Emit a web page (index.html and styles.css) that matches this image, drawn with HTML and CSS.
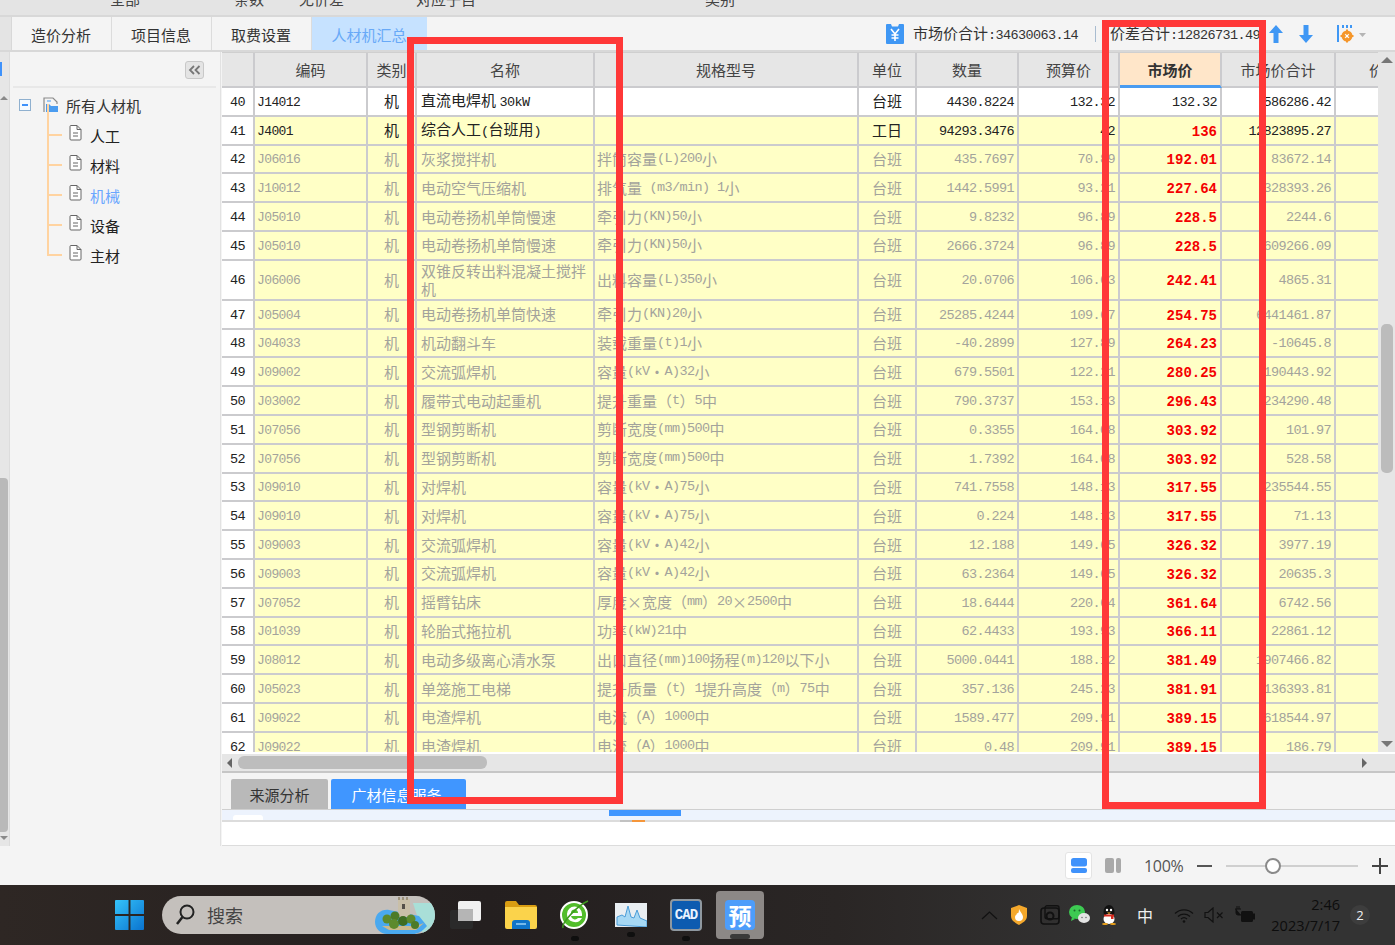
FILE: index.html
```html
<!DOCTYPE html>
<html lang="zh-CN">
<head>
<meta charset="utf-8">
<title>人材机汇总</title>
<link rel="stylesheet" href="styles.css">
</head>
<body>
<div class="topstrip">
  <span class="ts a">全部</span><span class="ts b">条数</span><span class="ts c1">无价差</span><span class="ts d">对应子目</span><span class="ts e">类别</span>
</div>

<div class="tabbar">
  <div class="tabstub"></div>
  <div class="tab">造价分析</div>
  <div class="tab">项目信息</div>
  <div class="tab">取费设置</div>
  <div class="tab active">人材机汇总</div>
  <div class="tools">
    <svg class="ico-yen" width="18" height="20" viewBox="0 0 18 20"><path d="M1 0h4l1 2.500h6l1-2.500h4a1 1 0 0 1 1 1v18a1 1 0 0 1-1 1H1a1 1 0 0 1-1-1V1a1 1 0 0 1 1-1z" fill="#3f97f4"/><path d="M5 5l4 5 4-5M9 10v7M5.500 11h7M5.500 14h7" stroke="#fff" stroke-width="1.600" fill="none"/></svg>
    <span class="sum">市场价合计<span class="l">:34630063.14</span></span>
    <span class="vsep"></span>
    <span class="sum s2">价差合计<span class="l">:12826731.49</span></span>
    <svg class="ico-up" width="14" height="18" viewBox="0 0 14 18"><path d="M7 0l7 8H9.500v10h-5V8H0z" fill="#3f97f4"/></svg>
    <svg class="ico-down" width="14" height="18" viewBox="0 0 14 18"><path d="M7 18l7-8H9.500V0h-5v10H0z" fill="#3f97f4"/></svg>
    <svg class="ico-set" width="32" height="20" viewBox="0 0 32 20"><path d="M1 1v17" stroke="#3f97f4" stroke-width="2"/><path d="M6 1v3M10 1v3M14 1v3" stroke="#3f97f4" stroke-width="2"/><circle cx="10" cy="12" r="4" fill="none" stroke="#f5962a" stroke-width="3"/><path d="M10 5.500v13M3.500 12h13" stroke="#f5962a" stroke-width="2"/><circle cx="10" cy="12" r="1.500" fill="#fff"/><path d="M22 9h7l-3.500 4z" fill="#b5b5b5"/></svg>
  </div>
</div>

<div class="main">
  <div class="leftstrip">
    <div class="lmark"></div>
    <div class="lcaret"></div>
    <div class="lthumb"></div>
    <div class="lcaret2"></div>
  </div>
  <aside class="side">
    <div class="sidehead"><button class="collapse"><svg width="13" height="10" viewBox="0 0 13 10"><path d="M6 1L2 5l4 4M11.500 1L7.500 5l4 4" fill="none" stroke="#777" stroke-width="1.800"/></svg></button></div>
    <div class="tree">
      <div class="root">
        <span class="exp"></span>
        <svg class="ico-root" width="16" height="16" viewBox="0 0 16 16"><path d="M1 15V1h9l4 4v2" fill="none" stroke="#8a8a8a" stroke-width="1.200"/><path d="M3 15h12V9H8L6 7H3z" fill="#4a9cf0"/><path d="M4 3h4v2H4z" fill="#9fc8f2"/></svg>
        <span>所有人材机</span>
      </div>
      <div class="leaf"><svg class="ico-doc" width="13" height="16" viewBox="0 0 13 16"><path d="M1 1.500a1 1 0 0 1 1-1h6l4 4v9.500a1 1 0 0 1-1 1H2a1 1 0 0 1-1-1zM8 .5v4h4M4 8h5M4 11h5" fill="#fff" stroke="#666"/></svg><span>人工</span></div>
      <div class="leaf"><svg class="ico-doc" width="13" height="16" viewBox="0 0 13 16"><path d="M1 1.500a1 1 0 0 1 1-1h6l4 4v9.500a1 1 0 0 1-1 1H2a1 1 0 0 1-1-1zM8 .5v4h4M4 8h5M4 11h5" fill="#fff" stroke="#666"/></svg><span>材料</span></div>
      <div class="leaf on"><svg class="ico-doc" width="13" height="16" viewBox="0 0 13 16"><path d="M1 1.500a1 1 0 0 1 1-1h6l4 4v9.500a1 1 0 0 1-1 1H2a1 1 0 0 1-1-1zM8 .5v4h4M4 8h5M4 11h5" fill="#fff" stroke="#666"/></svg><span>机械</span></div>
      <div class="leaf"><svg class="ico-doc" width="13" height="16" viewBox="0 0 13 16"><path d="M1 1.500a1 1 0 0 1 1-1h6l4 4v9.500a1 1 0 0 1-1 1H2a1 1 0 0 1-1-1zM8 .5v4h4M4 8h5M4 11h5" fill="#fff" stroke="#666"/></svg><span>设备</span></div>
      <div class="leaf last"><svg class="ico-doc" width="13" height="16" viewBox="0 0 13 16"><path d="M1 1.500a1 1 0 0 1 1-1h6l4 4v9.500a1 1 0 0 1-1 1H2a1 1 0 0 1-1-1zM8 .5v4h4M4 8h5M4 11h5" fill="#fff" stroke="#666"/></svg><span>主材</span></div>
    </div>
  </aside>

  <section class="content">
    <div class="tablewrap">
      <div class="table">
        <div class="row head">
          <div class="c"></div><div class="c">编码</div><div class="c">类别</div><div class="c">名称</div><div class="c">规格型号</div><div class="c">单位</div><div class="c">数量</div><div class="c">预算价</div><div class="c hot">市场价</div><div class="c">市场价合计</div><div class="c cut">价差合计</div>
        </div>
        <div class="row white"><div class="c no">40</div><div class="c code">J14012</div><div class="c mid">机</div><div class="c nm"><span>直流电焊机 <span class="l">30kW</span></span></div><div class="c sp"></div><div class="c mid">台班</div><div class="c r">4430.8224</div><div class="c r">132.32</div><div class="c r">132.32</div><div class="c r">586286.42</div><div class="c"></div></div>
        <div class="row"><div class="c no">41</div><div class="c code">J4001</div><div class="c mid">机</div><div class="c nm"><span>综合人工<span class="l">(</span>台班用<span class="l">)</span></span></div><div class="c sp"></div><div class="c mid">工日</div><div class="c r">94293.3476</div><div class="c r">42</div><div class="c r p">136</div><div class="c r">12823895.27</div><div class="c"></div></div>
        <div class="row dim"><div class="c no">42</div><div class="c code">J06016</div><div class="c mid">机</div><div class="c nm">灰浆搅拌机</div><div class="c sp">拌筒容量<span class="l">(L)200</span>小</div><div class="c mid">台班</div><div class="c r">435.7697</div><div class="c r">70.89</div><div class="c r p">192.01</div><div class="c r">83672.14</div><div class="c"></div></div>
        <div class="row dim"><div class="c no">43</div><div class="c code">J10012</div><div class="c mid">机</div><div class="c nm">电动空气压缩机</div><div class="c sp">排气量<span class="l"> (m3/min) 1</span>小</div><div class="c mid">台班</div><div class="c r">1442.5991</div><div class="c r">93.21</div><div class="c r p">227.64</div><div class="c r">328393.26</div><div class="c"></div></div>
        <div class="row dim"><div class="c no">44</div><div class="c code">J05010</div><div class="c mid">机</div><div class="c nm">电动卷扬机单筒慢速</div><div class="c sp">牵引力<span class="l">(KN)50</span>小</div><div class="c mid">台班</div><div class="c r">9.8232</div><div class="c r">96.89</div><div class="c r p">228.5</div><div class="c r">2244.6</div><div class="c"></div></div>
        <div class="row dim"><div class="c no">45</div><div class="c code">J05010</div><div class="c mid">机</div><div class="c nm">电动卷扬机单筒慢速</div><div class="c sp">牵引力<span class="l">(KN)50</span>小</div><div class="c mid">台班</div><div class="c r">2666.3724</div><div class="c r">96.89</div><div class="c r p">228.5</div><div class="c r">609266.09</div><div class="c"></div></div>
        <div class="row dim tall"><div class="c no">46</div><div class="c code">J06006</div><div class="c mid">机</div><div class="c nm">双锥反转出料混凝土搅拌机</div><div class="c sp">出料容量<span class="l">(L)350</span>小</div><div class="c mid">台班</div><div class="c r">20.0706</div><div class="c r">106.63</div><div class="c r p">242.41</div><div class="c r">4865.31</div><div class="c"></div></div>
        <div class="row dim"><div class="c no">47</div><div class="c code">J05004</div><div class="c mid">机</div><div class="c nm">电动卷扬机单筒快速</div><div class="c sp">牵引力<span class="l">(KN)20</span>小</div><div class="c mid">台班</div><div class="c r">25285.4244</div><div class="c r">109.67</div><div class="c r p">254.75</div><div class="c r">6441461.87</div><div class="c"></div></div>
        <div class="row dim"><div class="c no">48</div><div class="c code">J04033</div><div class="c mid">机</div><div class="c nm">机动翻斗车</div><div class="c sp">装载重量<span class="l">(t)1</span>小</div><div class="c mid">台班</div><div class="c r">-40.2899</div><div class="c r">127.89</div><div class="c r p">264.23</div><div class="c r">-10645.8</div><div class="c"></div></div>
        <div class="row dim"><div class="c no">49</div><div class="c code">J09002</div><div class="c mid">机</div><div class="c nm">交流弧焊机</div><div class="c sp">容量<span class="l">(kV</span>・<span class="l">A)32</span>小</div><div class="c mid">台班</div><div class="c r">679.5501</div><div class="c r">122.21</div><div class="c r p">280.25</div><div class="c r">190443.92</div><div class="c"></div></div>
        <div class="row dim"><div class="c no">50</div><div class="c code">J03002</div><div class="c mid">机</div><div class="c nm">履带式电动起重机</div><div class="c sp">提升重量（<span class="l">t</span>）<span class="l">5</span>中</div><div class="c mid">台班</div><div class="c r">790.3737</div><div class="c r">153.13</div><div class="c r p">296.43</div><div class="c r">234290.48</div><div class="c"></div></div>
        <div class="row dim"><div class="c no">51</div><div class="c code">J07056</div><div class="c mid">机</div><div class="c nm">型钢剪断机</div><div class="c sp">剪断宽度<span class="l">(mm)500</span>中</div><div class="c mid">台班</div><div class="c r">0.3355</div><div class="c r">164.08</div><div class="c r p">303.92</div><div class="c r">101.97</div><div class="c"></div></div>
        <div class="row dim"><div class="c no">52</div><div class="c code">J07056</div><div class="c mid">机</div><div class="c nm">型钢剪断机</div><div class="c sp">剪断宽度<span class="l">(mm)500</span>中</div><div class="c mid">台班</div><div class="c r">1.7392</div><div class="c r">164.08</div><div class="c r p">303.92</div><div class="c r">528.58</div><div class="c"></div></div>
        <div class="row dim"><div class="c no">53</div><div class="c code">J09010</div><div class="c mid">机</div><div class="c nm">对焊机</div><div class="c sp">容量<span class="l">(kV</span>・<span class="l">A)75</span>小</div><div class="c mid">台班</div><div class="c r">741.7558</div><div class="c r">148.13</div><div class="c r p">317.55</div><div class="c r">235544.55</div><div class="c"></div></div>
        <div class="row dim"><div class="c no">54</div><div class="c code">J09010</div><div class="c mid">机</div><div class="c nm">对焊机</div><div class="c sp">容量<span class="l">(kV</span>・<span class="l">A)75</span>小</div><div class="c mid">台班</div><div class="c r">0.224</div><div class="c r">148.13</div><div class="c r p">317.55</div><div class="c r">71.13</div><div class="c"></div></div>
        <div class="row dim"><div class="c no">55</div><div class="c code">J09003</div><div class="c mid">机</div><div class="c nm">交流弧焊机</div><div class="c sp">容量<span class="l">(kV</span>・<span class="l">A)42</span>小</div><div class="c mid">台班</div><div class="c r">12.188</div><div class="c r">149.65</div><div class="c r p">326.32</div><div class="c r">3977.19</div><div class="c"></div></div>
        <div class="row dim"><div class="c no">56</div><div class="c code">J09003</div><div class="c mid">机</div><div class="c nm">交流弧焊机</div><div class="c sp">容量<span class="l">(kV</span>・<span class="l">A)42</span>小</div><div class="c mid">台班</div><div class="c r">63.2364</div><div class="c r">149.65</div><div class="c r p">326.32</div><div class="c r">20635.3</div><div class="c"></div></div>
        <div class="row dim"><div class="c no">57</div><div class="c code">J07052</div><div class="c mid">机</div><div class="c nm">摇臂钻床</div><div class="c sp">厚度<span class="fw">×</span>宽度（<span class="l">mm</span>）<span class="l">20</span><span class="fw">×</span><span class="l">2500</span>中</div><div class="c mid">台班</div><div class="c r">18.6444</div><div class="c r">220.64</div><div class="c r p">361.64</div><div class="c r">6742.56</div><div class="c"></div></div>
        <div class="row dim"><div class="c no">58</div><div class="c code">J01039</div><div class="c mid">机</div><div class="c nm">轮胎式拖拉机</div><div class="c sp">功率<span class="l">(kW)21</span>中</div><div class="c mid">台班</div><div class="c r">62.4433</div><div class="c r">193.93</div><div class="c r p">366.11</div><div class="c r">22861.12</div><div class="c"></div></div>
        <div class="row dim"><div class="c no">59</div><div class="c code">J08012</div><div class="c mid">机</div><div class="c nm">电动多级离心清水泵</div><div class="c sp">出口直径<span class="l">(mm)100</span>扬程<span class="l">(m)120</span>以下小</div><div class="c mid">台班</div><div class="c r">5000.0441</div><div class="c r">188.12</div><div class="c r p">381.49</div><div class="c r">1907466.82</div><div class="c"></div></div>
        <div class="row dim"><div class="c no">60</div><div class="c code">J05023</div><div class="c mid">机</div><div class="c nm">单笼施工电梯</div><div class="c sp">提升质量（<span class="l">t</span>）<span class="l">1</span>提升高度（<span class="l">m</span>）<span class="l">75</span>中</div><div class="c mid">台班</div><div class="c r">357.136</div><div class="c r">245.23</div><div class="c r p">381.91</div><div class="c r">136393.81</div><div class="c"></div></div>
        <div class="row dim"><div class="c no">61</div><div class="c code">J09022</div><div class="c mid">机</div><div class="c nm">电渣焊机</div><div class="c sp">电流（<span class="l">A</span>）<span class="l">1000</span>中</div><div class="c mid">台班</div><div class="c r">1589.477</div><div class="c r">209.91</div><div class="c r p">389.15</div><div class="c r">618544.97</div><div class="c"></div></div>
        <div class="row dim"><div class="c no">62</div><div class="c code">J09022</div><div class="c mid">机</div><div class="c nm">电渣焊机</div><div class="c sp">电流（<span class="l">A</span>）<span class="l">1000</span>中</div><div class="c mid">台班</div><div class="c r">0.48</div><div class="c r">209.91</div><div class="c r p">389.15</div><div class="c r">186.79</div><div class="c"></div></div>
      </div>
      <div class="vscroll">
        <div class="arrow-up"></div>
        <div class="vthumb"></div>
        <div class="arrow-down"></div>
      </div>
    </div>
    <div class="hscroll">
      <div class="arrow-left"></div>
      <div class="hthumb"></div>
      <div class="arrow-right"></div>
    </div>
    <div class="btabs">
      <div class="btab">来源分析</div>
      <div class="btab on">广材信息服务</div>
    </div>
    <div class="band">
      <div class="pill"></div>
      <div class="blue"></div>
    </div>
    <div class="marks"><span class="mk-g"></span><span class="mk-o"></span></div>
    <div class="blank"></div>
  </section>
</div>

<div class="status">
  <div class="viewbtn"><svg width="16" height="15" viewBox="0 0 16 15"><rect width="16" height="8.500" rx="2.500" fill="#3f92fb"/><rect y="10" width="16" height="5" rx="2" fill="#3f92fb"/></svg></div>
  <svg class="view2" width="16" height="15" viewBox="0 0 16 15"><rect width="9" height="15" rx="2" fill="#a9a9a9"/><rect x="11" width="5" height="15" rx="2" fill="#a9a9a9"/></svg>
  <span class="zoomval">100%</span>
  <span class="minus"></span>
  <div class="slider"><span class="knob"></span></div>
  <span class="plus"></span>
</div>

<footer class="taskbar">
  <svg class="win" width="29" height="30" viewBox="0 0 30 30" preserveAspectRatio="none"><defs><linearGradient id="wg" x1="0" y1="0" x2="1" y2="1"><stop offset="0" stop-color="#35c3fa"/><stop offset="1" stop-color="#0a73cf"/></linearGradient></defs><path d="M0 1a1 1 0 0 1 1-1h13v14H0zM16 0h13a1 1 0 0 1 1 1v13H16zM0 16h14v14H1a1 1 0 0 1-1-1zM16 16h14v13a1 1 0 0 1-1 1H16z" fill="url(#wg)"/></svg>
  <div class="search">
    <svg class="mag" width="20" height="22" viewBox="0 0 20 22"><circle cx="12" cy="8" r="6.500" fill="none" stroke="#222" stroke-width="2"/><path d="M7.500 13L2 20" stroke="#222" stroke-width="2.500"/></svg>
    <span class="stext">搜索</span>
    <svg class="island" width="62" height="38" viewBox="0 0 62 38"><path d="M40 7h22v24c-3 5-8 7-12 7z" fill="#a9dfd8"/><path d="M2 26c0-8 6-13 14-12l30 6 8 10c-5 6-10 8-14 8H14C7 38 2 32 2 26z" fill="#4aa9ef"/><path d="M25 3h12v18H25z" fill="#c9bfa8"/><path d="M25 1h2v3h-2zM29 1h2v3h-2zM33 1h2v3h-2z" fill="#9c927c"/><path d="M29 8h3v5h-3z" fill="#55504a"/><path d="M9 30l34 0 8-3-8 7H16z" fill="#cbb98c"/><circle cx="14" cy="23" r="4.500" fill="#5d8a2d"/><circle cx="22" cy="20" r="4.500" fill="#4c7b28"/><circle cx="21" cy="28" r="5" fill="#5d8a2d"/><circle cx="30" cy="25" r="5" fill="#3f6d22"/><circle cx="38" cy="23" r="4.500" fill="#5d8a2d"/><circle cx="42" cy="29" r="4" fill="#4c7b28"/></svg>
  </div>
  <svg class="tv" width="32" height="28" viewBox="0 0 32 28"><rect x="0" y="9" width="23" height="19" rx="2" fill="#2a2a2a"/><rect x="8" y="0" width="23" height="20" rx="2" fill="#f1f1f1"/><rect x="8" y="8" width="15" height="12" fill="#b5b5b5"/></svg>
  <div class="tbitem it-folder"><svg width="32" height="28" viewBox="0 0 32 28"><path d="M0 2a2 2 0 0 1 2-2h9l3 4h16a2 2 0 0 1 2 2v4H0z" fill="#d99d12"/><path d="M0 6h32v20a2 2 0 0 1-2 2H2a2 2 0 0 1-2-2z" fill="#fbd34b"/><path d="M7 28v-6a3 3 0 0 1 3-3h12a3 3 0 0 1 3 3v6z" fill="#0f74c9"/><path d="M11 23h10" stroke="#9ad0f5" stroke-width="1.500"/></svg><i class="dot nodot"></i></div>
  <div class="tbitem it-ie"><svg width="30" height="32" viewBox="0 0 30 32"><circle cx="14" cy="16" r="13" fill="#52bd2b"/><circle cx="14" cy="16" r="13" fill="none" stroke="#fff" stroke-width="2"/><path d="M7 15a7.500 7.500 0 0 1 15 0v2H11a4 4 0 0 0 7 2h4a8 8 0 0 1-15-4zm4-1h7a3.500 3.500 0 0 0-7 0z" fill="#fff"/><path d="M3 29C1 24 18 6 28 2" fill="none" stroke="#3f9a20" stroke-width="1.500"/></svg><i class="dot"></i></div>
  <div class="tbitem it-chart"><svg width="32" height="24" viewBox="0 0 32 24"><rect width="32" height="24" fill="#e9eef2"/><path d="M2 22V14l5-2 3 2 3-11 3 11 3 1 3-8 3 8 7 3v6z" fill="#a6d8f4" stroke="#4a9cd8"/></svg><i class="dot"></i></div>
  <div class="tbitem it-cad"><div class="cad">CAD</div><i class="dot"></i></div>
  <div class="tbactive"><div class="yu">预</div><i class="bar"></i></div>

  <div class="tray">
    <svg class="tr-up" width="17" height="9" viewBox="0 0 17 9"><path d="M1 8l7.500-7L16 8" fill="none" stroke="#111" stroke-width="1.200"/></svg>
    <svg class="tr-shield" width="16" height="20" viewBox="0 0 16 20"><path d="M0 3l8-3 8 3v8c0 5-5 7-8 9-3-2-8-4-8-9z" fill="#f4a82c"/><path d="M8 4c1 3 4 5 4 8a4 4 0 0 1-8 0c0-2 2-2 2-4 1 1 2 0 2-4z" fill="#fff"/></svg>
    <svg class="tr-cap" width="20" height="20" viewBox="0 0 20 20"><rect x="1" y="3" width="18" height="16" rx="3" fill="none" stroke="#111" stroke-width="1.600"/><rect x="5" y="0.800" width="14" height="13" rx="2" fill="none" stroke="#111" stroke-width="1.400"/><circle cx="10" cy="11" r="3.500" fill="none" stroke="#111" stroke-width="2"/></svg>
    <svg class="tr-wx" width="21" height="20" viewBox="0 0 21 20"><ellipse cx="8" cy="7" rx="8" ry="7" fill="#3dca52"/><path d="M3 12l-1 4 4-2z" fill="#3dca52"/><ellipse cx="15" cy="13" rx="6" ry="5" fill="#e4e4e4"/><circle cx="5.500" cy="5.500" r="1" fill="#1a6a2a"/><circle cx="10.500" cy="5.500" r="1" fill="#1a6a2a"/><circle cx="13" cy="12.500" r=".8" fill="#777"/><circle cx="17" cy="12.500" r=".8" fill="#777"/></svg>
    <svg class="tr-qq" width="16" height="20" viewBox="0 0 16 20"><ellipse cx="8" cy="7" rx="5.500" ry="7" fill="#111"/><ellipse cx="8" cy="14" rx="5.500" ry="5" fill="#fff"/><path d="M3 9.500h10v2H3zM10 11h2.500v3H10z" fill="#d62a1e"/><ellipse cx="4" cy="19" rx="3" ry="1" fill="#f3a71a"/><ellipse cx="12" cy="19" rx="3" ry="1" fill="#f3a71a"/><circle cx="6" cy="5" r="1.200" fill="#fff"/><circle cx="10" cy="5" r="1.200" fill="#fff"/><path d="M6 7.500h4l-2 1.500z" fill="#f3a71a"/></svg>
    <span class="ime">中</span>
    <svg class="tr-wifi" width="20" height="15" viewBox="0 0 20 15"><path d="M1 5.500a13 13 0 0 1 18 0M4 8.500a9 9 0 0 1 12 0M7 11a4.500 4.500 0 0 1 6 0" fill="none" stroke="#111" stroke-width="1.300"/><circle cx="10" cy="13.500" r="1.300" fill="#111"/></svg>
    <svg class="tr-vol" width="20" height="16" viewBox="0 0 20 16"><path d="M1 5.500h3L9 1v14l-5-4.500H1z" fill="none" stroke="#111" stroke-width="1.200"/><path d="M13 5.500l5.500 5.500M18.500 5.500L13 11" stroke="#111" stroke-width="1.200"/></svg>
    <svg class="tr-bat" width="20" height="18" viewBox="0 0 20 18"><rect x="6" y="5" width="12" height="11" rx="1.500" fill="#111"/><path d="M18 8h2v5h-2zM1 3v4a2 2 0 0 0 2 2h3M0 3h6M2 0v3M4 0v3" fill="#111" stroke="#111"/></svg>
    <div class="clock"><span>2:46</span><span>2023/7/17</span></div>
    <div class="notif">2</div>
  </div>
</footer>

<div class="redbox rb1"></div>
<div class="redbox rb2"></div>
</body>
</html>
```
FILE: styles.css
```css
* { box-sizing: border-box; }
html, body { margin: 0; padding: 0; }
body {
  width: 1395px; height: 945px; overflow: hidden; position: relative;
  display: flex; flex-direction: column;
  font-family: "Noto Sans CJK SC", "Liberation Sans", sans-serif;
  font-size: 15px; color: #333; background: #f4f4f4;
}
.l { font-family: "Liberation Mono", "Noto Sans CJK SC", monospace; font-size: 13.500px; letter-spacing: -.6px; white-space: pre; }
.fw { display: inline-block; width: 15px; text-align: center; }

/* top strip */
.topstrip { height: 17px; flex: none; background: #e4e4e4; border-bottom: 2px solid #d8d8d8; display: flex; overflow: hidden; }
.ts { line-height: 16px; margin-top: -9px; font-size: 15px; color: #444; flex: none; }
.ts.a { margin-left: 110px; }
.ts.b { margin-left: 94px; }
.ts.c1 { margin-left: 35px; }
.ts.d { margin-left: 72px; }
.ts.e { margin-left: 229px; }

/* tab bar */
.tabbar { height: 35px; flex: none; display: flex; background: #f4f4f4; border-bottom: 2px solid #d8d8d8; }
.tabstub { width: 12px; background: #e4e4e4; border-right: 1px solid #d8d8d8; }
.tab { width: 100px; display: flex; align-items: center; justify-content: center; border-right: 1px solid #dcdcdc; line-height: 20px; padding: 2px 1px 0 0; }
.tab.active { width: 115px; background: #c6e2ff; color: #68a9f7; border-right: 0; }
.tools { flex: 1; display: flex; align-items: center; }
.ico-yen { margin-left: 459px; }
.sum { margin-left: 9px; line-height: 20px; white-space: nowrap; padding-top: 2px; }
.vsep { width: 1px; height: 16px; background: #a8bcd0; margin-left: 17px; }
.sum.s2 { margin-left: 14px; width: 151px; overflow: hidden; }
.ico-up { margin-left: 8px; }
.ico-down { margin-left: 16px; }
.ico-set { margin-left: 24px; }

/* main */
.main { height: 794px; flex: none; display: flex; background: #f4f4f4; }
.leftstrip { width: 10px; flex: none; background: #e6e6e6; display: flex; flex-direction: column; border-right: 1px solid #dcdcdc; }
.lmark { width: 2px; height: 14px; margin-top: 10px; background: #3f92fb; }
.lcaret { width: 0; height: 0; margin-top: 20px; margin-left: 0; border: 4px solid transparent; border-bottom-color: #8a8a8a; border-top: 0; }
.lthumb { width: 8px; height: 354px; margin-top: 378px; background: #b9b9b9; border-radius: 0 4px 4px 0; }
.lcaret2 { width: 0; height: 0; margin-top: 4px; border: 4px solid transparent; border-top-color: #8a8a8a; border-bottom: 0; }
.side { width: 211px; flex: none; display: flex; flex-direction: column; border-right: 1px solid #e2e2e2; padding: 0 4px 0 3px; margin-right: 1px; }
.sidehead { height: 36px; flex: none; border-bottom: 2px solid #e8e8e8; display: flex; justify-content: flex-end; align-items: flex-start; padding: 9px 12px 0 0; }
.collapse { width: 19px; height: 18px; padding: 0; border: 1px solid #c8c8c8; border-radius: 3px; background: #e4e4e4; display: flex; align-items: center; justify-content: center; }
.tree { display: flex; flex-direction: column; color: #333; }
.root { height: 30px; display: flex; align-items: center; margin-top: 2px; }
.exp { width: 12px; height: 12px; margin-left: 6px; border: 1px solid #8fb0cf; background: #f7fbff; position: relative; flex: none; }
.exp::after { content: ""; position: absolute; left: 2px; right: 2px; top: 4px; height: 1.500px; background: #3f92fb; }
.ico-root { margin-left: 12px; margin-right: 7px; flex: none; }
.leaf { height: 30px; display: flex; align-items: center; position: relative; padding-left: 56px; }
.leaf::before { content: ""; position: absolute; left: 34px; top: -16px; bottom: 14px; border-left: 2px solid #ffd3a0; }
.leaf::after { content: ""; position: absolute; left: 34px; width: 15px; top: 14px; border-top: 2px solid #ffd3a0; }
.ico-doc { margin-right: 8px; flex: none; margin-top: -4px; }
.leaf span { line-height: 20px; padding-top: 2px; color: #222; }
.leaf.on span { color: #6aa6ff; }

/* table */
.content { flex: 1; min-width: 0; display: flex; flex-direction: column; }
.tablewrap { height: 700px; flex: none; display: flex; background: #fff; }
.table { width: 1156px; flex: none; height: 700px; overflow: hidden; border-top: 1px solid #cfcfcf; }
.row {
  display: grid;
  grid-template-columns: 33px 113px 49px 178px 264px 58px 102px 101px 102px 114px 42px;
  height: 28.800px; background: #ffffc6; color: #222;
}
.row.head { height: 35px; background: #e6e6e6; color: #444; }
.row.white { background: #fff; }
.row.dim { color: #a3a39c; }
.row.tall { height: 40px; }
.c {
  display: flex; align-items: center; min-width: 0; overflow: hidden;
  border-right: 2px solid #cbcbce; border-bottom: 2px solid #cbcbce;
  padding: 0 2px 0 2px; line-height: 18px; white-space: nowrap;
}
.head .c { justify-content: center; line-height: 20px; padding-top: 1px; }
.head .c.hot { background: #ffe6c9; font-weight: 700; color: #333; border-bottom: 3px solid #4a9cf0; }
.head .c.cut { justify-content: flex-start; padding-left: 33px; border-right: 0; }
.c.no { background: #fff; color: #222; font: 13.500px/18px "Liberation Mono", monospace; letter-spacing: -.6px; justify-content: center; padding: 3px 0 0; }
.c.code { font: 13px/18px "Liberation Mono", monospace; letter-spacing: -.6px; padding-top: 3px; }
.c.mid { justify-content: center; padding: 0; }
.c.nm { padding-left: 4px; white-space: normal; }
.c.sp { padding-left: 2px; }
.c.r { justify-content: flex-end; font: 13.500px/18px "Liberation Mono", monospace; letter-spacing: -.6px; padding: 3px 3px 0 0; }
.row.dim .c.r.p, .c.r.p { color: #f40000; font: 700 14px/18px "Liberation Mono", monospace; letter-spacing: 0; padding: 3px 3px 0 0; }
.row .c:last-child { border-right: 0; }

/* scrollbars */
.vscroll { flex: 1; background: #e6e6e6; display: flex; flex-direction: column; align-items: center; position: relative; }
.arrow-up { width: 0; height: 0; margin-top: 5px; border: 6px solid transparent; border-bottom: 6px solid #777; border-top: 0; }
.vthumb { width: 12px; height: 149px; margin-top: 261px; background: #bcbcbc; border-radius: 5px; }
.arrow-down { width: 0; height: 0; margin-top: 268px; border: 6px solid transparent; border-top: 6px solid #777; border-bottom: 0; }
.hscroll { height: 21px; flex: none; background: #e6e6e6; border-top: 2px solid #fff; border-bottom: 2px solid #c6c6c6; display: flex; align-items: center; padding-left: 5px; }
.arrow-left { width: 0; height: 0; border: 5px solid transparent; border-right: 5px solid #666; border-left: 0; }
.hthumb { width: 249px; height: 13px; margin-left: 6px; background: #bdbdbd; border-radius: 6px; }
.arrow-right { width: 0; height: 0; margin-left: 875px; border: 5px solid transparent; border-left: 5px solid #666; border-right: 0; }
.btabs { height: 37px; flex: none; display: flex; align-items: flex-end; padding-left: 9px; gap: 3px; border-bottom: 1px solid #cfcfcf; background: #f4f4f4; }
.btab { width: 97px; height: 30px; display: flex; align-items: center; justify-content: center; background: #b9b9b9; color: #333; border-radius: 2px 2px 0 0; }
.btab.on { width: 135px; background: #4096ff; color: #fff; padding-right: 4px; }
.band { height: 10px; flex: none; background: #edf3fd; display: flex; align-items: flex-start; }
.pill { width: 30px; height: 5px; margin: 5px 0 0 11px; background: #fff; border-radius: 3px 3px 0 0; }
.blue { width: 72px; height: 6px; margin-left: 346px; background: #4096ff; }
.marks { height: 2px; flex: none; background: #dcdcdc; display: flex; padding-left: 398px; }
.mk-g { width: 12px; background: #c2c2c2; }
.mk-o { width: 13px; background: #f5963a; }
.blank { flex: 1; background: #fff; border-bottom: 1px solid #dcdcdc; }

/* status */
.status { height: 39px; flex: none; display: flex; align-items: center; background: #f4f4f4; padding-left: 1065px; }
.viewbtn { width: 27px; height: 27px; background: #fff; border: 1px solid #e4e4e4; border-radius: 3px; display: flex; align-items: center; justify-content: center; }
.view2 { margin-left: 13px; }
.zoomval { margin-left: 23px; width: 40px; font: 16px/20px "Open Sans", sans-serif; color: #555; letter-spacing: -.3px; white-space: nowrap; }
.minus { width: 15px; height: 2px; margin-left: 13px; background: #555; }
.slider { width: 132px; height: 2px; margin-left: 14px; background: #cfcfcf; position: relative; }
.knob { position: absolute; left: 39px; top: -7px; width: 16px; height: 16px; border-radius: 50%; background: #fff; border: 2px solid #8a8a8a; }
.plus { width: 16px; height: 16px; margin-left: 14px; position: relative; background: linear-gradient(#444,#444) center/16px 2px no-repeat, linear-gradient(#444,#444) center/2px 16px no-repeat; }

/* taskbar */
.taskbar { height: 60px; flex: none; display: flex; align-items: center; padding-left: 115px; background: linear-gradient(90deg, #2e2724 0%, #241f1f 35%, #2a2625 60%, #333 80%, #333 100%); color: #111; }
.win { flex: none; }
.search { width: 273px; height: 38px; margin-left: 18px; border-radius: 19px; background: #c4c0bc; display: flex; align-items: center; padding-left: 13px; overflow: hidden; flex: none; }
.stext { font-size: 18px; line-height: 24px; color: #444; margin-left: 12px; }
.mag { flex: none; }
.island { margin-left: auto; flex: none; }
.tv { margin-left: 15px; flex: none; }
.tbitem { position: relative; display: flex; justify-content: center; flex: none; }
.it-folder { margin-left: 23px; width: 32px; }
.it-ie { margin-left: 23px; width: 30px; }
.it-chart { margin-left: 25px; width: 32px; }
.it-cad { margin-left: 23px; width: 32px; }
.dot { position: absolute; left: 50%; margin-left: -4px; bottom: -10px; width: 8px; height: 5px; border-radius: 3px; background: #0f0f0f; }
.nodot { display: none; }
.cad { width: 32px; height: 32px; border: 2px solid #8f98a0; border-radius: 4px; background: #0d5bb0; color: #e8f2ff; font: 700 14px/28px "Liberation Mono", monospace; text-align: center; letter-spacing: -.9px; }
.tbactive { width: 48px; height: 48px; margin-left: 14px; border-radius: 4px; background: #8c8886; position: relative; display: flex; justify-content: center; padding-top: 9px; flex: none; }
.yu { width: 30px; height: 30px; border-radius: 4px; background: #4d9dfb; color: #fff; font-size: 23px; font-weight: 700; line-height: 30px; text-align: center; }
.bar { position: absolute; bottom: 0; left: 14px; width: 20px; height: 5px; border-radius: 3px; background: #3a3a3a; }
.tray { margin-left: auto; display: flex; align-items: center; padding-right: 25px; }
.tr-shield { margin-left: 13px; }
.tr-cap { margin-left: 13px; }
.tr-wx { margin-left: 9px; }
.tr-qq { margin-left: 11px; }
.ime { margin-left: 20px; width: 16px; color: #f0f0f0; font-size: 16px; line-height: 20px; }
.tr-wifi { margin-left: 21px; }
.tr-vol { margin-left: 10px; }
.tr-bat { margin-left: 11px; }
.clock { width: 85px; display: flex; flex-direction: column; align-items: flex-end; font: 14.500px/21px "Open Sans", sans-serif; color: #0d0d0d; }
.notif { width: 20px; height: 20px; margin-left: 10px; border-radius: 50%; background: #3d3d3d; color: #f0f0f0; font: 13px/20px "Open Sans", sans-serif; text-align: center; }

/* hand-drawn annotation boxes lying over the screenshot */
.redbox { position: absolute; border: 7px solid #ff3838; pointer-events: none; }
.rb1 { left: 407px; top: 37px; width: 216px; height: 767px; }
.rb2 { left: 1102px; top: 20px; width: 164px; height: 789px; }
```
